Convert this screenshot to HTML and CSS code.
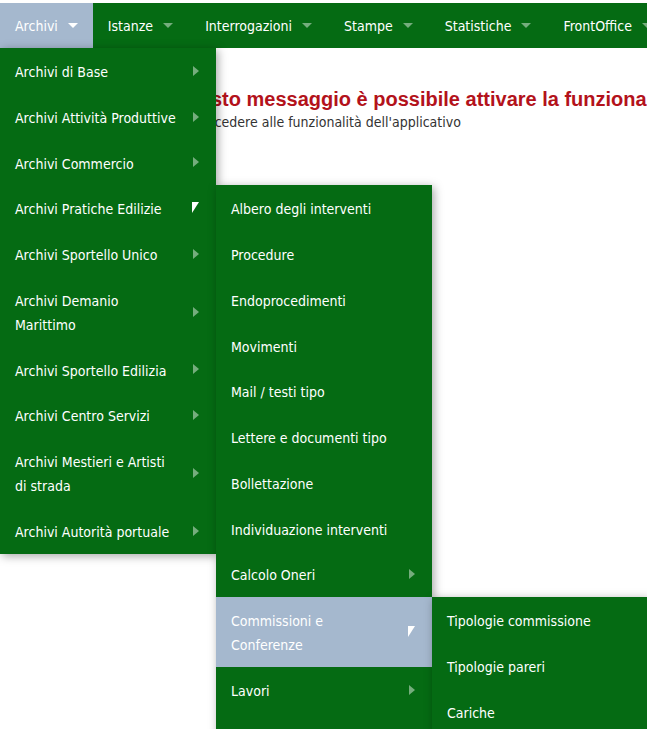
FILE: index.html
```html
<!DOCTYPE html>
<html lang="it">
<head>
<meta charset="utf-8">
<title>Menu</title>
<link rel="stylesheet" href="styles.css">
</head>
<body>
<nav class="topbar">
  <ul class="menu">
    <li class="top active"><a class="toplink">Archivi <span class="caret"></span></a>
      <ul class="dd">
        <li><a class="item">Archivi di Base<span class="arr"></span></a></li>
        <li><a class="item">Archivi Attività Produttive<span class="arr"></span></a></li>
        <li><a class="item">Archivi Commercio<span class="arr"></span></a></li>
        <li class="open"><a class="item">Archivi Pratiche Edilizie<span class="arr"></span></a>
          <ul class="dd sub long">
            <li><a class="item">Albero degli interventi</a></li>
            <li><a class="item">Procedure</a></li>
            <li><a class="item">Endoprocedimenti</a></li>
            <li><a class="item">Movimenti</a></li>
            <li><a class="item">Mail / testi tipo</a></li>
            <li><a class="item">Lettere e documenti tipo</a></li>
            <li><a class="item">Bollettazione</a></li>
            <li><a class="item">Individuazione interventi</a></li>
            <li><a class="item">Calcolo Oneri<span class="arr"></span></a></li>
            <li class="open hl"><a class="item">Commissioni e Conferenze<span class="arr"></span></a>
              <ul class="dd sub">
                <li><a class="item">Tipologie commissione</a></li>
                <li><a class="item">Tipologie pareri</a></li>
                <li><a class="item">Cariche</a></li>
              </ul>
            </li>
            <li><a class="item">Lavori<span class="arr"></span></a></li>
          </ul>
        </li>
        <li><a class="item">Archivi Sportello Unico<span class="arr"></span></a></li>
        <li><a class="item">Archivi Demanio Marittimo<span class="arr"></span></a></li>
        <li><a class="item">Archivi Sportello Edilizia<span class="arr"></span></a></li>
        <li><a class="item">Archivi Centro Servizi<span class="arr"></span></a></li>
        <li><a class="item">Archivi Mestieri e Artisti di strada<span class="arr"></span></a></li>
        <li><a class="item">Archivi Autorità portuale<span class="arr"></span></a></li>
      </ul>
    </li>
    <li class="top"><a class="toplink">Istanze <span class="caret"></span></a></li>
    <li class="top"><a class="toplink">Interrogazioni <span class="caret"></span></a></li>
    <li class="top"><a class="toplink">Stampe <span class="caret"></span></a></li>
    <li class="top"><a class="toplink">Statistiche <span class="caret"></span></a></li>
    <li class="top"><a class="toplink">FrontOffice <span class="caret"></span></a></li>
    <li class="top"><a class="toplink">Utilità <span class="caret"></span></a></li>
  </ul>
</nav>
<main class="content">
  <h2 class="msg-title">Con questo messaggio è possibile attivare la funzionalità richiesta</h2>
  <p class="msg-text">Per potere accedere alle funzionalità dell'applicativo</p>
</main>
</body>
</html>
```
FILE: styles.css
```css
html {
  margin: 0;
  padding: 0;
  overflow: hidden;
  background: #ffffff;
}
body {
  margin: 0;
  padding: 3px 0 0 0;
  min-height: 729px;
  font-family: "DejaVu Sans Condensed", "DejaVu Sans", sans-serif;
  font-size: 14px;
  color: #333333;
}
.topbar {
  background: #056b13;
  height: 45px;
  position: relative;
  z-index: 10;
}
.menu {
  list-style: none;
  margin: 0;
  padding: 0;
  display: flex;
  flex-wrap: nowrap;
  height: 45px;
}
.top {
  position: relative;
  flex: 0 0 auto;
}
.toplink {
  display: flex;
  align-items: center;
  height: 45px;
  padding: 0 17px 0 15px;
  color: #ffffff;
  white-space: nowrap;
  cursor: pointer;
}
.top.active > .toplink {
  background: #a5b8ce;
  padding-left: 15px;
  padding-right: 15px;
}
.caret {
  display: inline-block;
  width: 0;
  height: 0;
  margin-left: 10px;
  border-left: 5px solid transparent;
  border-right: 5px solid transparent;
  border-top: 5px solid rgba(255, 255, 255, 0.45);
}
.top.active .caret {
  border-top-color: #ffffff;
}
.dd {
  list-style: none;
  margin: 0;
  padding: 0;
  position: absolute;
  top: 100%;
  left: 0;
  width: 216px;
  background: #056b13;
  box-shadow: 2px 2px 9px rgba(0, 0, 0, 0.35);
}
.dd.sub {
  top: 0;
  left: 100%;
}
.dd.long {
  padding-bottom: 40px;
}
.dd li {
  position: relative;
}
.item {
  display: block;
  position: relative;
  padding: 12px 36px 9.75px 15px;
  line-height: 24px;
  color: #ffffff;
  cursor: pointer;
}
.hl > .item {
  background: #a5b8ce;
}
.arr {
  position: absolute;
  right: 17px;
  top: 50%;
  margin-top: -5px;
  width: 0;
  height: 0;
  border-top: 5px solid transparent;
  border-bottom: 5px solid transparent;
  border-left: 6px solid rgba(255, 255, 255, 0.45);
}
.open > .item > .arr {
  margin-top: -6px;
  border-bottom: 0;
  border-left: 0;
  border-top: 11px solid #ffffff;
  border-right: 7px solid transparent;
}
.content {
  padding-left: 131px;
  white-space: nowrap;
}
.msg-title {
  margin: 40px 0 0 0;
  font-family: "Liberation Sans", Arial, sans-serif;
  font-size: 20px;
  font-weight: bold;
  line-height: 23px;
  color: #b3121b;
}
.msg-text {
  margin: 1px 0 0 0;
  line-height: 20px;
  color: #333333;
}
```
